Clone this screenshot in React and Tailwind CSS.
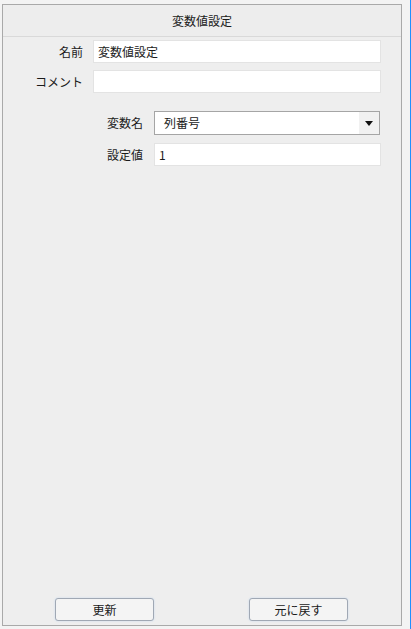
export default function App() {
  const font = { fontFamily: '"Noto Sans CJK JP", "Noto Sans", sans-serif' };
  return (
    <div className="w-[411px] h-[629px] bg-[#f3f3f3] flex text-[12px] text-[#1a1a1a]" style={font}>
      <div className="ml-[2px] mt-[4px] w-[400px] h-[622px] border border-[#a9a9a9] bg-[#eeeeee] flex flex-col">
        <div className="h-[32px] border-b border-[#d9d9d9] bg-[#ededed] flex items-center justify-center leading-none">
          変数値設定
        </div>
        <div className="flex items-center mt-[3px]">
          <div className="w-[80px] text-right leading-none">名前</div>
          <div className="ml-[10px] w-[288px] h-[23px] bg-white border border-[#e3e3e3] flex items-center pl-[4px] leading-none">変数値設定</div>
        </div>
        <div className="flex items-center mt-[7px]">
          <div className="w-[80px] text-right leading-none">コメント</div>
          <div className="ml-[10px] w-[288px] h-[23px] bg-white border border-[#e3e3e3]"></div>
        </div>
        <div className="flex items-center mt-[18px]">
          <div className="w-[140px] text-right leading-none">変数名</div>
          <div className="ml-[11px] w-[226px] h-[24px] bg-white border border-[#a5a5a5] flex items-center">
            <div className="flex-1 pl-[9px] leading-none">列番号</div>
            <div className="w-[20px] h-full bg-[#f1f1f1] flex items-center justify-center">
              <svg width="8" height="5" viewBox="0 0 8 5"><path d="M0 0H8L4 5Z" fill="#111" /></svg>
            </div>
          </div>
        </div>
        <div className="flex items-center mt-[8px]">
          <div className="w-[140px] text-right leading-none">設定値</div>
          <div className="ml-[11px] w-[227px] h-[23px] bg-white border border-[#e3e3e3] flex items-center pl-[4px] leading-none">1</div>
        </div>
        <div className="flex-1"></div>
        <div className="flex mb-[4px] pl-[52px] gap-[95px]">
          <button className="w-[99px] h-[23px] rounded-[3px] border border-[#a0a8b4] bg-[#f4f4f4] shadow-[0_0_2px_#c4d8ee] flex items-center justify-center leading-none">更新</button>
          <button className="w-[99px] h-[23px] rounded-[3px] border border-[#a0a8b4] bg-[#f4f4f4] shadow-[0_0_2px_#c4d8ee] flex items-center justify-center leading-none">元に戻す</button>
        </div>
      </div>
      <div className="ml-[8px] w-[1px] h-full bg-[#1e90ff]"></div>
    </div>
  );
}
